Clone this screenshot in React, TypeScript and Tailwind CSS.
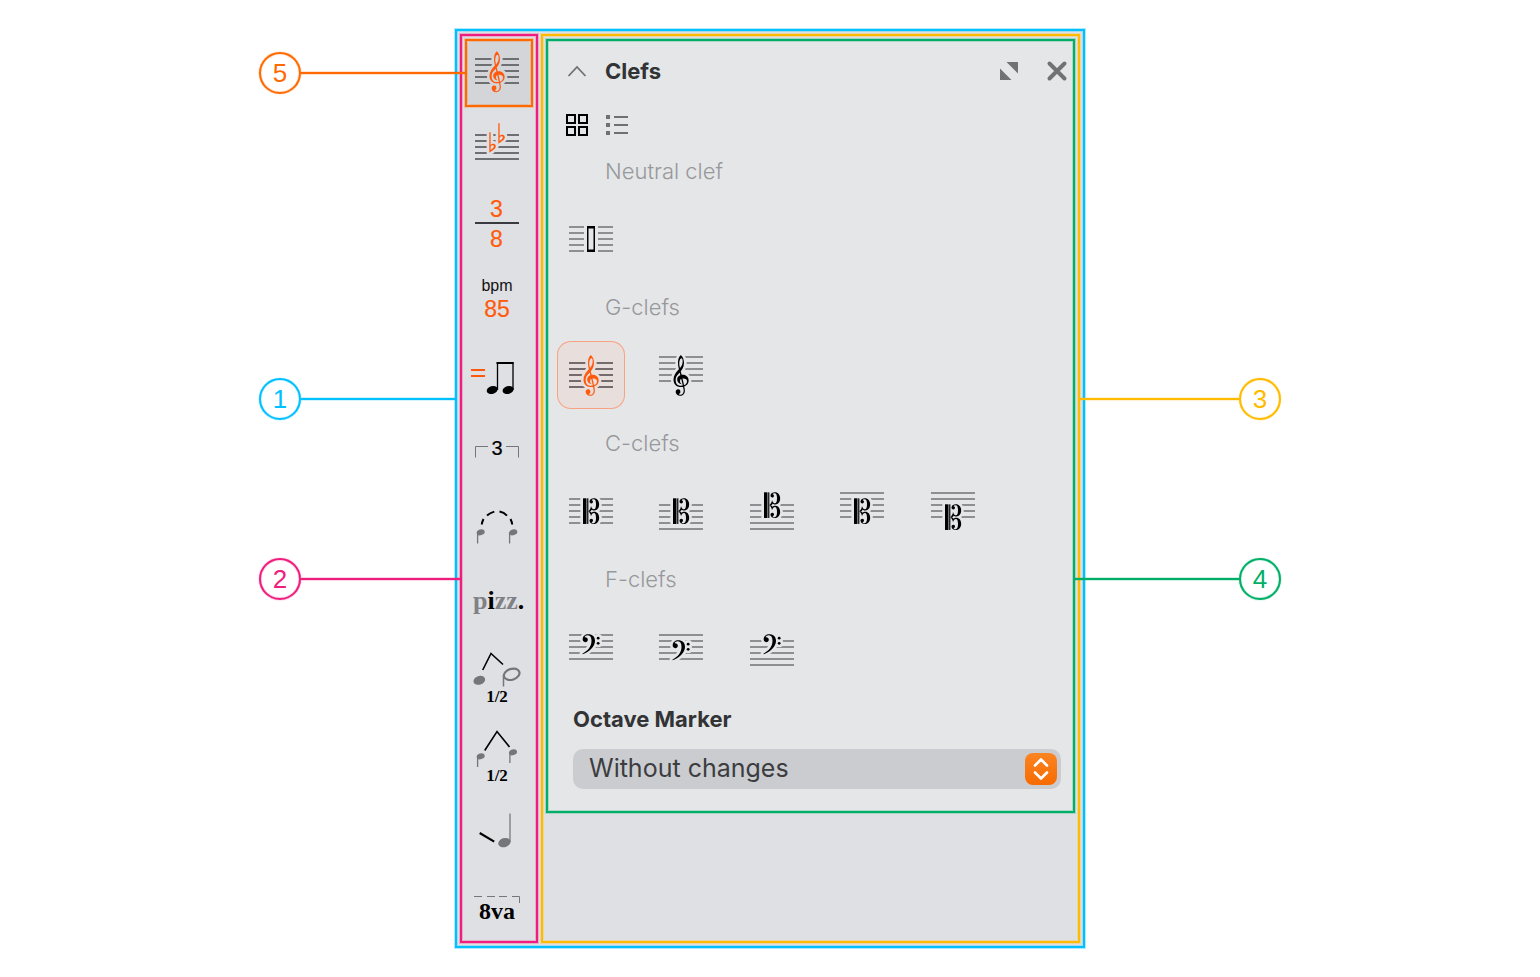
import { useState, type ReactNode } from "react";

const SANS = "Liberation Sans, Arial, sans-serif";
const SERIF = "Liberation Serif, Times New Roman, serif";
const ORANGE = "#ff5a0c";
const GRAY = "#75767a";
const SIDEBAR_BG = "#dfe0e4";
const ACTIVE_BG = "#d4d5d9";
const PANEL_BG = "#e5e6e8";
const SELECTED_BG = "#e8dedc";

function Icon({ children }: { children: ReactNode }) {
  return (
    <svg viewBox="0 0 68 68" className="block h-[68px] w-[68px] shrink-0 overflow-visible" aria-hidden="true">
      {children}
    </svg>
  );
}

/* Five staff lines, the first one centred on y. */
function Staff({ x, y, color }: { x: number; y: number; color: string }) {
  return (
    <g fill={color} shapeRendering="crispEdges">
      {[0, 6, 12, 18, 24].map((d) => (
        <rect key={d} x={x} y={y + d - 1} width={44} height={2} />
      ))}
    </g>
  );
}

/* Glyphs are drawn on a grid three times finer than the icon, over a halo in the background colour. */
function Glyph({ x, y, halo, color, children }: { x: number; y: number; halo: string; color: string; children: ReactNode }) {
  return (
    <g transform={`translate(${x} ${y}) scale(0.3333)`}>
      <g fill={halo} stroke={halo} strokeWidth={16} strokeLinejoin="round">
        {children}
      </g>
      <g fill={color}>{children}</g>
    </g>
  );
}

const G_BODY =
  "M22 0C28 5 31.500 14 31.500 23C31.500 37 25 46 18 53C11 60 6.500 66 6.500 74C6.500 86 12 92 22 92C34 92 40.500 87 40.500 79C40.500 73.500 36 70.500 30 70.500C23 70.500 19.500 73 19.500 78C19.500 82 21 85 25 87.500C17 86 11 81 11 74C11 65 19 59.500 28 59.500C38.500 59.500 45.500 67 45.500 77C45.500 88.500 35 96 22 96C9 96 0 87 0 74C0 62 7 53 14 45C22 37 27.500 31 27.500 19C27.500 14 26 10 23.500 10C19 12 16.500 20 17.500 30C21.500 50 32 86 34 104C35 116 28 122.500 20 122.500C12 122.500 6.500 117 6.500 110.500A7.200 7.200 0 1 1 17.500 116C16.500 118 17 119.500 20 119.500C27 119.500 31 114 30.500 105C28 88 18 52 14 32C12 16 15 6 22 0Z";

function GClef(props: { x: number; y: number; halo: string; color: string }) {
  return (
    <Glyph {...props}>
      <path d={G_BODY} />
    </Glyph>
  );
}

const C_TOP =
  "M16 38.5C21 34 23.5 29 24 23C26 30 29 33 33 33C37 33 39 27 39 18C39 8 37 2.5 32 2.5C29 2.5 26 3.5 26 5.5C31 6 32 15 25 15.5C21 15.5 19.5 12 19.5 9.5C20 3 26 0 33 0C42 0 48.5 8 48.5 18C48.5 30 42 36.5 34 36.5C30 36.5 28 35.5 26 34C25 36 23 37.5 21 38.5Z";

function CClef(props: { y: number }) {
  return (
    <Glyph x={26} y={props.y} halo={PANEL_BG} color="#000">
      <rect x={0} y={0} width={10.5} height={77} />
      <rect x={12.5} y={0} width={3.6} height={77} />
      <path d={C_TOP} />
      <path d={C_TOP} transform="matrix(1 0 0 -1 0 77)" />
    </Glyph>
  );
}

function FClef(props: { y: number }) {
  return (
    <Glyph x={25} y={props.y} halo={PANEL_BG} color="#000">
      <path d="M2 15C2 6 9 0 19 0C31 0 39 7 39 19C39 37 22 52 2 60L1 58C17 49 28.500 37 28.500 19C28.500 9 25 2.500 18 2.500C12 2.500 8 5 8 9C13 8 17.500 11 17.500 16C17.500 20 14 23.500 10 23.500C5 23.500 2 20 2 15Z" />
      <circle cx={48.500} cy={11.500} r={4.200} />
      <circle cx={48.500} cy={27} r={4.200} />
    </Glyph>
  );
}

const FLAT =
  "M0 0H4V38C8 33 19.500 32 19.500 42C19.500 51 8 55 0 61.500ZM4 42.500V53C9 50 13.500 46 13.500 42C13.500 37 6.500 38 4 42.500Z";

/* Two flats, the second a step up and to the right; they share one halo. */
function Flats() {
  return (
    <Glyph x={24.3} y={17.3} halo={SIDEBAR_BG} color={ORANGE}>
      <path fillRule="evenodd" d={FLAT} />
      <path fillRule="evenodd" d={FLAT} transform="translate(27 -27)" />
    </Glyph>
  );
}

function Head({ x, y, rx, ry, color = GRAY }: { x: number; y: number; rx: number; ry: number; color?: string }) {
  return <ellipse cx={x} cy={y} rx={rx} ry={ry} fill={color} transform={`rotate(-18 ${x} ${y})`} />;
}

const tools: { label: string; icon: ReactNode }[] = [
  {
    label: "Clefs",
    icon: (
      <Icon>
        <Staff x={10} y={20} color="#6e6f73" />
        <GClef x={24.5} y={12.3} halo={ACTIVE_BG} color={ORANGE} />
      </Icon>
    ),
  },
  {
    label: "Key signatures",
    icon: (
      <Icon>
        <Staff x={10} y={20} color="#6e6f73" />
        <Flats />
        <rect x={10} y={43} width={44} height={2} fill="#6e6f73" />
      </Icon>
    ),
  },
  {
    label: "Time signatures",
    icon: (
      <Icon>
        <g fontFamily={SANS} fontSize={23} fill={ORANGE} stroke={ORANGE} strokeWidth={0.2} textAnchor="middle">
          <text x={31.500} y={26}>3</text>
          <text x={31.500} y={56}>8</text>
        </g>
        <rect x={10} y={31} width={44} height={2} fill="#3a3b3e" />
      </Icon>
    ),
  },
  {
    label: "Tempo",
    icon: (
      <Icon>
        <text x={32} y={24} fontFamily={SANS} fontSize={16} fill="#111" textAnchor="middle">bpm</text>
        <text x={32} y={50} fontFamily={SANS} fontSize={23} fill={ORANGE} stroke={ORANGE} strokeWidth={0.2} textAnchor="middle">85</text>
      </Icon>
    ),
  },
  {
    label: "Swing",
    icon: (
      <Icon>
        <path d="M6 26h14v2h-14zM6 32h14v2h-14z" fill={ORANGE} />
        <path d="M32.500 47V20H48V47" fill="none" stroke="#000" strokeWidth={1.300} />
        <path d="M31.500 19H48.600V21H31.500z" />
        <Head x={27.2} y={47} rx={5.600} ry={3.900} color="#000" />
        <Head x={43.1} y={47} rx={5.600} ry={3.900} color="#000" />
      </Icon>
    ),
  },
  {
    label: "Tuplets",
    icon: (
      <Icon>
        <path d="M10.500 38.500V27.500H23M41 27.500H53.500V38.500" fill="none" stroke={GRAY} />
        <text x={32} y={36} fontFamily={SANS} fontSize={20} fill="#000" stroke="#000" strokeWidth={0.200} textAnchor="middle">3</text>
      </Icon>
    ),
  },
  {
    label: "Ties and slurs",
    icon: (
      <Icon>
        <path
          d="M16.800 29.500Q17 27 18.500 24M22 20.600Q25 17.800 29.300 16.600M34.500 16.600Q39 17.500 42 20.600M45.500 24Q47 27 47.200 29.500"
          fill="none"
          stroke="#000"
          strokeWidth={2}
        />
        <path d="M12.600 37V48.500M44.600 37V48.500" stroke={GRAY} strokeWidth={1.300} />
        <Head x={15.700} y={37.300} rx={4.100} ry={2.900} />
        <Head x={48.300} y={37.300} rx={4.100} ry={2.900} />
      </Icon>
    ),
  },
  {
    label: "Playing techniques",
    icon: (
      <Icon>
        <text x={8} y={38} fontFamily={SERIF} fontSize={26} fontWeight={700} fill="#808185">
          p<tspan fill="#000">i</tspan>zz<tspan fill="#000">.</tspan>
        </text>
      </Icon>
    ),
  },
  {
    label: "Halve note values",
    icon: (
      <Icon>
        <path d="M17.700 23L26 6.500L38 17.500" fill="none" stroke="#000" strokeWidth={1.600} />
        <Head x={14.300} y={33.300} rx={6} ry={4.300} />
        <ellipse cx={46.700} cy={27.300} rx={8} ry={5.400} fill="none" stroke={GRAY} strokeWidth={2.2} transform="rotate(-18 46.700 27.300)" />
        <path d="M38.500 28V39.500" stroke={GRAY} strokeWidth={1.500} />
        <text x={32} y={55} fontFamily={SERIF} fontSize={17} fontWeight={700} textAnchor="middle">1/2</text>
      </Icon>
    ),
  },
  {
    label: "Halve pauses",
    icon: (
      <Icon>
        <path d="M19.700 27.500L32 8.500L44.500 24" fill="none" stroke="#000" strokeWidth={1.600} />
        <path d="M12.600 33V44M44.900 29V40" stroke={GRAY} strokeWidth={1.300} />
        <Head x={15.700} y={33.300} rx={4.100} ry={2.900} />
        <Head x={48} y={29.300} rx={4.100} ry={2.900} />
        <text x={32} y={58} fontFamily={SERIF} fontSize={17} fontWeight={700} textAnchor="middle">1/2</text>
      </Icon>
    ),
  },
  {
    label: "Ornaments",
    icon: (
      <Icon>
        <path d="M14.700 34L29.200 42.600" stroke="#000" strokeWidth={2.200} />
        <path d="M45 14.500V43" stroke="#8b8c90" strokeWidth={1.600} />
        <Head x={39.400} y={43.600} rx={6.300} ry={4.500} />
      </Icon>
    ),
  },
  {
    label: "Octave lines",
    icon: (
      <Icon>
        <path d="M9 21.500H17M22 21.500H30M34 21.500H42M47 21.500H54.500V28" fill="none" stroke={GRAY} />
        <text x={32} y={44} fontFamily={SERIF} fontSize={24} fontWeight={700} textAnchor="middle">8va</text>
      </Icon>
    ),
  },
];

const STAFF_COLOR = "#8e8f92";

function trebleIcon(y: number) {
  return function TrebleIcon({ selected }: { selected: boolean }) {
    return (
      <Icon>
        <Staff x={12} y={y} color={selected ? "#756b6c" : STAFF_COLOR} />
        <GClef x={26.5} y={14} halo={selected ? SELECTED_BG : PANEL_BG} color={selected ? ORANGE : "#000"} />
      </Icon>
    );
  };
}

function cIcon(staffY: number, clefY: number) {
  return function CIcon() {
    return (
      <Icon>
        <Staff x={12} y={staffY} color={STAFF_COLOR} />
        <CClef y={clefY} />
      </Icon>
    );
  };
}

function fIcon(staffY: number, clefY: number) {
  return function FIcon() {
    return (
      <Icon>
        <Staff x={12} y={staffY} color={STAFF_COLOR} />
        <FClef y={clefY} />
      </Icon>
    );
  };
}

function NeutralIcon() {
  return (
    <Icon>
      <Staff x={12} y={22} color={STAFF_COLOR} />
      <rect x={27} y={20} width={14} height={28} fill={PANEL_BG} />
      <path fillRule="evenodd" d="M30 21H38V47H30ZM31.500 23.500V44.500H36.500V23.500Z" />
    </Icon>
  );
}

type ClefIcon = (props: { selected: boolean }) => ReactNode;

const sections: { title: string; clefs: { name: string; Draw: ClefIcon }[] }[] = [
  { title: "Neutral clef", clefs: [{ name: "Neutral", Draw: NeutralIcon }] },
  {
    title: "G-clefs",
    clefs: [
      { name: "Treble", Draw: trebleIcon(22) },
      { name: "French violin", Draw: trebleIcon(16) },
    ],
  },
  {
    title: "C-clefs",
    clefs: [
      { name: "Alto", Draw: cIcon(22, 21.3) },
      { name: "Mezzo-soprano", Draw: cIcon(28, 21.3) },
      { name: "Soprano", Draw: cIcon(28, 15.3) },
      { name: "Tenor", Draw: cIcon(16, 21.3) },
      { name: "Baritone", Draw: cIcon(16, 27.3) },
    ],
  },
  {
    title: "F-clefs",
    clefs: [
      { name: "Bass", Draw: fIcon(22, 21.3) },
      { name: "Baritone F", Draw: fIcon(22, 27.3) },
      { name: "Subbass", Draw: fIcon(28, 21.3) },
    ],
  },
];

function Callout({ n, tone, line, reverse }: { n: number; tone: string; line: string; reverse?: boolean }) {
  return (
    <div className={`flex h-[42px] items-center ${reverse ? "flex-row-reverse" : ""} ${tone}`}>
      <span className="flex h-[42px] w-[42px] shrink-0 items-center justify-center rounded-full border-2 border-current text-[26px] leading-none shadow-[inset_0_0_1px_currentColor,0_0_1px_currentColor]">
        {n}
      </span>
      <span className={`h-[2px] shrink-0 bg-current shadow-[0_0_1px_currentColor,0_0_1px_currentColor] ${line}`} />
    </div>
  );
}

function Sidebar() {
  return (
    <nav
      aria-label="Tools"
      className="flex shrink-0 flex-col gap-2 border-2 border-[#ef1d7d] px-[3px] pt-[3px] pb-[2px] shadow-[0_0_0_1px_#ef1d7d40,inset_0_0_0_1px_#ef1d7d40]"
    >
      {tools.map((tool, i) => (
        <button
          key={tool.label}
          type="button"
          aria-label={tool.label}
          className={`relative flex h-[68px] w-[68px] items-start last:h-16 ${i === 0 ? "rounded-xl bg-[#d4d5d9]" : ""}`}
        >
          {tool.icon}
          {i === 0 && (
            <span className="absolute inset-0 border-2 border-[#ff6a00] shadow-[0_0_0_1px_#ff6a0040,inset_0_0_0_1px_#ff6a0040]" />
          )}
        </button>
      ))}
    </nav>
  );
}

function ClefPanel() {
  const [selected, setSelected] = useState("Treble");
  return (
    <section
      aria-label="Clefs"
      className="border-2 border-[#00ae68] bg-[#e5e6e8] font-[Inter,'Noto_Sans',sans-serif] shadow-[0_0_0_1px_#00ae6840,inset_0_0_0_1px_#00ae6840]"
    >
      <header className="flex h-[60px] items-center pr-[5px] pl-[19px]">
        <button type="button" aria-label="Collapse" className="mr-[18px]">
          <svg viewBox="0 0 20 20" className="block h-5 w-5" fill="none" stroke="#6f7073" strokeWidth={1.800}>
            <path d="M1.500 15L10 6L18.500 15" />
          </svg>
        </button>
        <h2 className="flex-1 text-[22px] leading-7 font-bold text-[#323335]">Clefs</h2>
        <button type="button" aria-label="Expand" className="mr-[27px]">
          <svg viewBox="0 0 20 20" className="block h-5 w-5" fill="#707275">
            <path d="M7.500 1H19V12.500ZM1 7.500L12.500 19H1Z" />
          </svg>
        </button>
        <button type="button" aria-label="Close">
          <svg viewBox="0 0 22 22" className="block h-[22px] w-[22px]" fill="none" stroke="#707275" strokeWidth={4} strokeLinecap="round">
            <path d="M3.500 3.500L18.500 18.500M18.500 3.500L3.500 18.500" />
          </svg>
        </button>
      </header>

      <div className="flex h-9 items-end gap-[17px] pb-px pl-[18px]">
        <button type="button" aria-label="Grid view">
          <svg viewBox="0 0 22 22" className="block h-[22px] w-[22px]" fill="none" stroke="#000" strokeWidth={2}>
            <path d="M1 1h8v8H1zM13 1h8v8H13zM1 13h8v8H1zM13 13h8v8H13z" />
          </svg>
        </button>
        <button type="button" aria-label="List view">
          <svg viewBox="0 0 24 22" className="block h-[22px] w-6" fill="#6f7073" shapeRendering="crispEdges">
            <path d="M1 1h4v4H1zM1 9h4v4H1zM1 17h4v4H1zM9 2h14v2H9zM9 10h14v2H9zM9 18h14v2H9z" />
          </svg>
        </button>
      </div>

      {sections.map((section) => (
        <div key={section.title}>
          <h3 className="flex h-[68px] items-center pl-[57px] text-[22px] leading-7 font-light text-[#97989b]">{section.title}</h3>
          <div className="grid grid-cols-5 pr-[64px] pl-[9px]">
            {section.clefs.map(({ name, Draw }) => {
              const on = selected === name;
              return (
                <button
                  key={name}
                  type="button"
                  aria-label={name}
                  aria-pressed={on}
                  onClick={() => setSelected(name)}
                  className={`h-[68px] w-[68px] rounded-[14px] ${on ? "bg-[#e8dedc] ring-1 ring-[#f9a283] ring-inset" : ""}`}
                >
                  <Draw selected={on} />
                </button>
              );
            })}
          </div>
        </div>
      ))}

      <div className="pt-6 pr-3 pb-[22px] pl-[25px]">
        <label htmlFor="octave-marker" className="block h-11 text-[22px] leading-7 font-bold text-[#323335]">
          Octave Marker
        </label>
        <div className="relative">
          <select
            id="octave-marker"
            className="block h-10 w-full appearance-none rounded-[10px] bg-[#cbccd0] pr-10 pl-4 text-[25px] text-[#3c3d40]"
          >
            <option>Without changes</option>
          </select>
          <svg viewBox="0 0 32 32" className="pointer-events-none absolute top-1 right-1 h-8 w-8" aria-hidden="true">
            <defs>
              <linearGradient id="stepper" x1="0" y1="0" x2="0" y2="1">
                <stop offset="0" stopColor="#fb8423" />
                <stop offset="1" stopColor="#f76b00" />
              </linearGradient>
            </defs>
            <rect width={32} height={32} rx={8} fill="url(#stepper)" />
            <path d="M10 12.500L16 6.500L22 12.500M10 19.500L16 25.500L22 19.500" fill="none" stroke="#fff" strokeWidth={2.600} strokeLinecap="round" strokeLinejoin="round" />
          </svg>
        </div>
      </div>
    </section>
  );
}

export default function App() {
  return (
    <main className="min-h-screen bg-white pt-[29px] pb-[29px] font-['Liberation_Sans',Arial,sans-serif]">
      <div className="mx-auto flex max-w-[1022px]">
        <aside className="pointer-events-none relative z-10 w-[196px] shrink-0 pt-[23px]">
          <Callout n={5} tone="text-[#ff6a00]" line="w-[164px]" />
          <div className="pt-[284px]">
            <Callout n={1} tone="text-[#00c0ff]" line="w-[154px]" />
          </div>
          <div className="pt-[138px]">
            <Callout n={2} tone="text-[#ef1d7d]" line="w-[160px]" />
          </div>
        </aside>

        <div className="flex min-w-0 flex-1 gap-[3px] border-2 border-[#00c0ff] bg-[#dfe0e4] p-[3px] shadow-[0_0_0_1px_#00c0ff50,inset_0_0_0_1px_#00c0ff40]">
          <Sidebar />
          <div className="min-w-0 flex-1 border-2 border-[#ffbb00] p-[3px] shadow-[0_0_0_1px_#ffbb0040,inset_0_0_0_1px_#ffbb0040]">
            <ClefPanel />
          </div>
        </div>

        <aside className="pointer-events-none relative z-10 w-[196px] shrink-0 pt-[349px]">
          <Callout n={3} tone="text-[#ffbb00]" line="w-[160px]" reverse />
          <div className="pt-[138px]">
            <Callout n={4} tone="text-[#00ae68]" line="w-[164px]" reverse />
          </div>
        </aside>
      </div>
    </main>
  );
}
